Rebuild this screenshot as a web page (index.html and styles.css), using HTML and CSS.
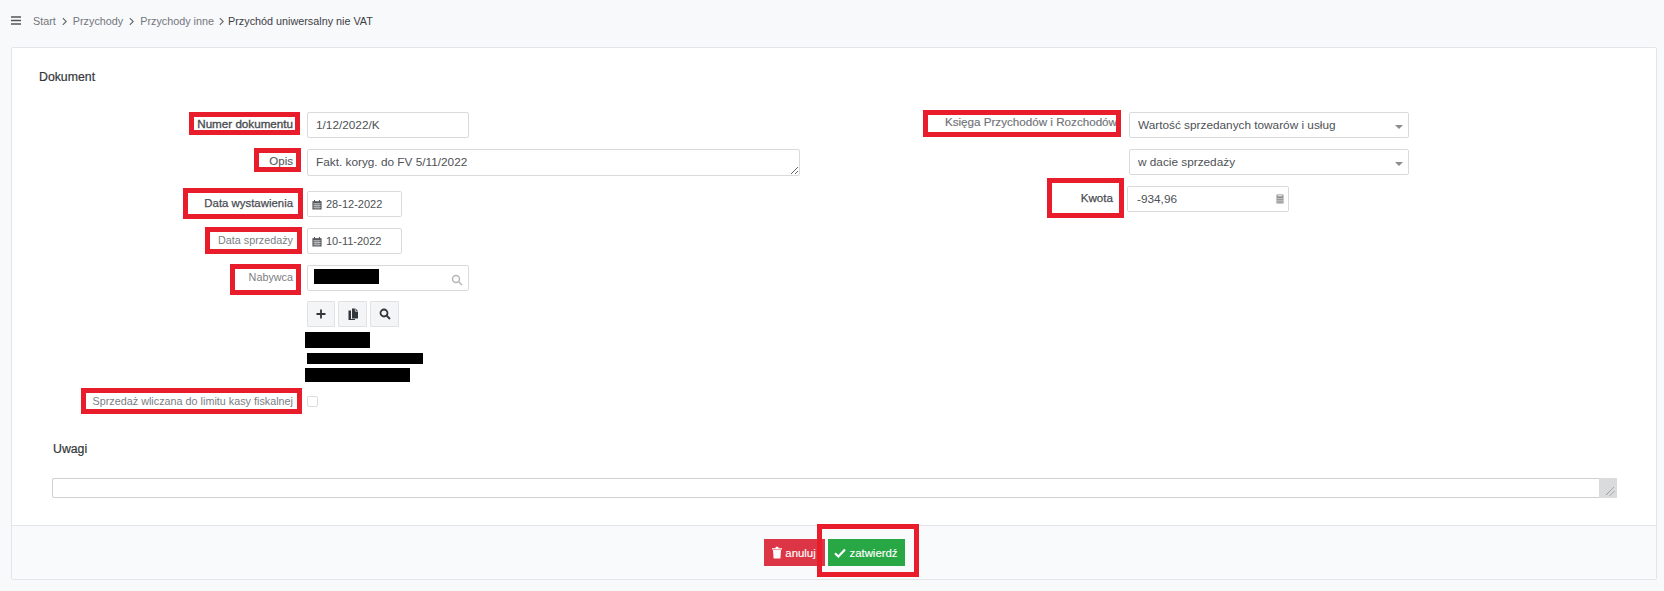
FILE: index.html
```html
<!DOCTYPE html>
<html lang="pl">
<head>
<meta charset="utf-8">
<title>Przychód uniwersalny nie VAT</title>
<link rel="stylesheet" href="styles.css">
</head>
<body>
<nav class="topbar">
  <svg class="burger" viewBox="0 0 10 9"><path d="M0 1h10M0 4.500h10M0 8h10"/></svg>
  <a class="crumb">Start</a>
  <svg class="chev" viewBox="0 0 6 8"><path d="M1.500 1l3 3-3 3"/></svg>
  <a class="crumb">Przychody</a>
  <svg class="chev" viewBox="0 0 6 8"><path d="M1.500 1l3 3-3 3"/></svg>
  <a class="crumb">Przychody inne</a>
  <svg class="chev chev-last" viewBox="0 0 6 8"><path d="M1.500 1l3 3-3 3"/></svg>
  <span class="crumb current">Przychód uniwersalny nie VAT</span>
</nav>
<main class="card">
  <section class="card-body">
    <h2 class="doc-title">Dokument</h2>
    <div class="columns">
      <div class="col-left">
        <div class="row row-a">
          <label class="lbl strong wide">Numer dokumentu</label>
          <input class="field w-md" value="1/12/2022/K">
        </div>
        <div class="row row-b">
          <label class="lbl medium">Opis</label>
          <textarea class="field area w-lg" rows="1">Fakt. koryg. do FV 5/11/2022</textarea>
        </div>
        <div class="row row-a">
          <label class="lbl strong">Data wystawienia</label>
          <div class="field w-sm date">
            <svg class="ico-cal" viewBox="0 0 12 12"><path d="M.5 2h11v10H.5z"/><path class="cal-holes" d="M1.500 5h9M1.500 7.200h9M1.500 9.400h9M3.700 4.500V11.500M6 4.500V11.500M8.300 4.500V11.500"/><path class="cal-rings" d="M3 .5v2.500M9 .5v2.500"/></svg>
            <span>28-12-2022</span>
          </div>
        </div>
        <div class="row row-a">
          <label class="lbl">Data sprzedaży</label>
          <div class="field w-sm date">
            <svg class="ico-cal" viewBox="0 0 12 12"><path d="M.5 2h11v10H.5z"/><path class="cal-holes" d="M1.500 5h9M1.500 7.200h9M1.500 9.400h9M3.700 4.500V11.500M6 4.500V11.500M8.300 4.500V11.500"/><path class="cal-rings" d="M3 .5v2.500M9 .5v2.500"/></svg>
            <span>10-11-2022</span>
          </div>
        </div>
        <div class="row row-c">
          <label class="lbl">Nabywca</label>
          <div class="field w-md lookup">
            <span class="redact r-buyer"></span>
            <svg class="ico-lens" viewBox="0 0 12 12"><circle cx="5" cy="5" r="3.500"/><path d="M7.500 7.500L11 11"/></svg>
          </div>
        </div>
        <div class="row row-btn">
          <span></span>
          <div class="tools">
            <button class="tool t-plus"><svg viewBox="0 0 12 12"><path d="M6 1.500v9M1.500 6h9"/></svg></button>
            <button class="tool"><svg class="solid" viewBox="0 0 12 12"><path d="M5 .5h3.500L11 3v7.500H5z"/><path class="fold" d="M8.300 .5v2.800H11"/><path d="M1.500 2.500H4v8.500h4v1H1.500z"/></svg></button>
            <button class="tool"><svg viewBox="0 0 12 12"><circle cx="5" cy="5" r="3.500"/><path d="M7.500 7.500L11 11"/></svg></button>
          </div>
        </div>
        <div class="row row-red">
          <span></span>
          <div class="redacted">
            <span class="redact r1"></span>
            <span class="redact r2"></span>
            <span class="redact r3"></span>
          </div>
        </div>
        <div class="row row-check">
          <label class="lbl">Sprzedaż wliczana do limitu kasy fiskalnej</label>
          <input class="check" type="checkbox">
        </div>
      </div>
      <div class="col-right">
        <div class="row-r row-a">
          <label class="lbl-r">Księga Przychodów i Rozchodów</label>
          <div class="select-wrap"><select class="select"><option>Wartość sprzedanych towarów i usług</option></select></div>
        </div>
        <div class="row-r row-a">
          <span></span>
          <div class="select-wrap"><select class="select"><option>w dacie sprzedaży</option></select></div>
        </div>
        <div class="row-r row-amount">
          <label class="lbl-r amount-lbl">Kwota</label>
          <div class="field w-md amount">
            <span>-934,96</span>
            <svg class="ico-calc" viewBox="0 0 8 10"><path d="M.5.500h7v9h-7z"/><path class="calc-screen" d="M1.500 1.800h5M1.500 4.500h1M3.500 4.500h1M5.500 4.500h1M1.500 6.300h1M3.500 6.300h1M5.500 6.300h1M1.500 8h1M3.500 8h1M5.500 8h1"/></svg>
          </div>
        </div>
      </div>
    </div>
    <h3 class="notes-title">Uwagi</h3>
    <div class="notes-wrap">
      <textarea class="notes" rows="1"></textarea>
      <span class="grip"><svg viewBox="0 0 9 9"><path d="M0 8L8 0M4 8.500L8.500 4"/></svg></span>
    </div>
  </section>
  <footer class="card-foot">
    <button class="btn btn-cancel"><svg viewBox="0 0 10 12"><path d="M0 1.800h10V3H0zM3.300 1.800L3.900.3h2.200l.6 1.500zM1 3.600h8l-.6 8.400H1.600z"/></svg>anuluj</button>
    <button class="btn btn-ok"><svg viewBox="0 0 12 10"><path d="M1 5.200l3.400 3.300L11 1.500"/></svg>zatwierdź</button>
  </footer>
</main>
<div class="marks">
  <span class="mark m1"></span>
  <span class="mark m2"></span>
  <span class="mark m3"></span>
  <span class="mark m4"></span>
  <span class="mark m5"></span>
  <span class="mark m6"></span>
  <span class="mark m7"></span>
  <span class="mark m8"></span>
  <span class="mark m9"></span>
</div>
</body>
</html>
```
FILE: styles.css
```css
* { box-sizing: border-box; }
html, body { margin: 0; height: 591px; overflow: hidden; }
body {
  position: relative;
  background: #f8f9fb;
  font-family: "Liberation Sans", Arial, sans-serif;
  font-size: 11.800px;
  color: #4e5155;
}
.topbar { height: 47px; padding: 0 0 6px 11px; display: flex; align-items: center; font-size: 10.800px; }
.burger { width: 10px; height: 9px; margin-right: 12px; fill: none; stroke: #555; stroke-width: 1.300; }
.crumb { color: #73767b; }
.current { color: #3d4045; }
.chev { width: 7px; height: 9px; margin: 1px 5px 0 5px; fill: none; stroke: #666; stroke-width: 1; }
.chev-last { margin-right: 3px; margin-left: 4px; }
.card {
  margin: 0 7px 0 11px;
  height: 533px;
  background: #fff;
  border: 1px solid #e4e5e8;
  border-radius: 2px;
  display: flex;
  flex-direction: column;
}
.card-body { height: 477px; padding: 22px 39px 0 27px; }
.doc-title { margin: 0 0 28px; font-size: 12.300px; line-height: 14px; font-weight: 400; color: #33363a; -webkit-text-stroke: .2px #33363a; }
.columns { display: flex; height: 330px; }
.col-left { width: 880px; margin-left: -1px; flex: none; }
.col-right { flex: none; }
.row, .row-r { display: grid; align-items: start; }
.row { grid-template-columns: 269px 1fr; }
.row-a { height: 37px; }
.row-b { height: 42px; }
.row-c { height: 36px; }
.row-btn { height: 31px; }
.row-red { height: 57px; }
.row-check { height: 24px; align-items: center; }
.lbl { padding-right: 14px; text-align: right; line-height: 24px; font-size: 10.800px; color: #7b7e83; white-space: nowrap; }
.strong { font-size: 11.400px; color: #4a4d52; -webkit-text-stroke: .25px #4a4d52; }
.wide { font-size: 11.650px; -webkit-text-stroke: .35px #4a4d52; }
.medium { font-size: 11.500px; color: #55585c; -webkit-text-stroke: .1px #55585c; }
.field {
  height: 26px;
  border: 1px solid #d9dadc;
  border-radius: 2px;
  background: #fff;
  font: inherit;
  color: #4e5155;
  padding: 0 8px;
  outline: none;
  display: block;
}
.w-sm { width: 95px; }
.w-md { width: 162px; }
.w-lg { width: 493px; }
.area { height: 27px; padding-top: 5px; line-height: 15px; overflow: hidden; resize: both; }
.date { display: flex; align-items: center; gap: 4px; padding: 0 0 0 4px; font-size: 11px; }
.ico-cal { width: 10px; height: 11px; flex: none; }
.ico-cal path { fill: #55585c; }
.ico-cal .cal-holes { fill: none; stroke: #fff; stroke-width: .55; }
.ico-cal .cal-rings { fill: none; stroke: #55585c; stroke-width: 1.300; }
.lookup { position: relative; display: flex; align-items: center; padding-left: 6px; }
.ico-lens { position: absolute; right: 5px; top: 8px; width: 12px; height: 12px; fill: none; stroke: #b5b7ba; stroke-width: 1.500; }
.redact { display: block; background: #000; }
.r-buyer { width: 65px; height: 15px; margin-top: -3px; }
.tools { display: flex; gap: 3px; }
.tool {
  height: 26px;
  width: 29px;
  padding: 0;
  border: 1px solid #e0e1e3;
  border-radius: 1px;
  background: #f4f5f6;
  display: flex;
  align-items: center;
  justify-content: center;
}
.t-plus { width: 28px; }
.tool svg { width: 12px; height: 12px; fill: none; stroke: #33363a; stroke-width: 1.800; }
.tool svg.solid { fill: #33363a; stroke: none; }
.tool svg .fold { fill: none; stroke: #f4f5f6; stroke-width: .7; }
.redacted { margin-left: -2px; }
.r1 { width: 65px; height: 16px; margin-bottom: 5px; }
.r2 { width: 116px; height: 11px; margin: 0 0 4px 2px; }
.r3 { width: 105px; height: 14px; }
.check {
  appearance: none;
  margin: 0;
  width: 11px;
  height: 11px;
  border: 1px solid #dcdde0;
  border-radius: 2px;
  background: #fff;
}
.row-r { grid-template-columns: 211px 1fr; }
.lbl-r { text-align: right; line-height: 20px; padding-right: 12px; font-size: 11.650px; color: #6f7277; white-space: nowrap; -webkit-text-stroke: .15px #6f7277; }
.select-wrap { position: relative; width: 280px; }
.select-wrap::after {
  content: "";
  position: absolute;
  right: 6px;
  top: 13px;
  border: 4px solid transparent;
  border-top: 4px solid #8a8c90;
  border-bottom: 0;
}
.select {
  appearance: none;
  width: 280px;
  height: 26px;
  padding: 0 8px;
  border: 1px solid #d9dadc;
  border-radius: 2px;
  background: #fff;
  font: inherit;
  color: #4e5155;
  outline: none;
}
.row-amount { grid-template-columns: 209px 1fr; }
.amount-lbl { line-height: 24px; padding-right: 14px; color: #4a4d52; -webkit-text-stroke: .25px #4a4d52; }
.amount { display: flex; align-items: center; justify-content: space-between; padding: 0 4px 0 9px; }
.ico-calc { width: 8px; height: 10px; fill: none; }
.ico-calc path { fill: #8d8f92; }
.ico-calc .calc-screen { fill: none; stroke: #fff; stroke-width: .9; }
.notes-title { margin: 0 0 22px; font-size: 12.300px; line-height: 14px; font-weight: 400; color: #33363a; -webkit-text-stroke: .2px #33363a; padding-left: 14px; }
.notes-wrap { position: relative; display: flex; height: 20px; margin-left: 13px; width: 1565px; }
.notes {
  display: block;
  width: 100%;
  height: 20px;
  border: 1px solid #d0d1d3;
  border-right: 0;
  border-radius: 2px 0 0 2px;
  resize: none;
  outline: none;
  overflow: hidden;
  padding: 0;
}
.grip { position: absolute; right: 0; top: 0; width: 18px; height: 20px; background: #dadbdc; border-radius: 0 2px 2px 0; }
.grip svg { position: absolute; right: 2px; bottom: 2px; width: 9px; height: 9px; fill: none; stroke: #555; stroke-width: .7; stroke-dasharray: 1 .6; }
.card-foot {
  flex: 1;
  border-top: 1px solid #e4e5e8;
  background: #f9fafb;
  display: flex;
  justify-content: center;
  align-items: flex-start;
  gap: 3px;
  padding: 13px 0 0 0;
  font-size: 11.400px;
}
.btn {
  height: 27px;
  border: 0;
  padding: 0;
  color: #fff;
  font: inherit;
  display: flex;
  align-items: center;
  justify-content: center;
  gap: 3px;
  -webkit-text-stroke: .15px #fff;
}
.btn-cancel { width: 61px; background: #dc3545; }
.btn-cancel svg { width: 10px; height: 13px; fill: #fff; }
.btn-ok { width: 77px; background: #28a745; }
.btn-ok svg { width: 12px; height: 10px; fill: none; stroke: #fff; stroke-width: 2.200; }
.marks { position: absolute; inset: 0; pointer-events: none; }
.mark { position: absolute; display: block; border: 5px solid #e81c2a; }
.m1 { left: 189px; top: 112px; width: 111px; height: 23px; }
.m2 { left: 254px; top: 148px; width: 47px; height: 24px; }
.m3 { left: 183px; top: 188px; width: 120px; height: 31px; }
.m4 { left: 205px; top: 227px; width: 97px; height: 27px; }
.m5 { left: 230px; top: 264px; width: 71px; height: 31px; }
.m6 { left: 81px; top: 388px; width: 221px; height: 26px; }
.m7 { left: 923px; top: 110px; width: 198px; height: 27px; }
.m8 { left: 1047px; top: 178px; width: 77px; height: 40px; }
.m9 { left: 817px; top: 524px; width: 102px; height: 53px; }
```
